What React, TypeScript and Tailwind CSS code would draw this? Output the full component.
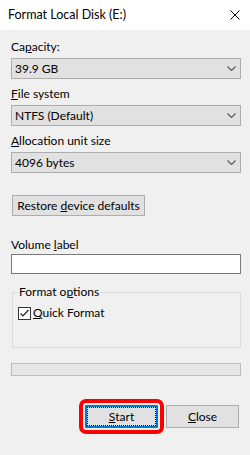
import React from "react";

function Chevron() {
  return (
    <svg width="9" height="5" viewBox="0 0 9 5" className="shrink-0">
      <path d="M0.5 0.5 L4.5 4.5 L8.5 0.5" fill="none" stroke="#5a5a5a" strokeWidth="1.2" />
    </svg>
  );
}

function Select({ value }: { value: string }) {
  return (
    <div className="flex h-[21px] items-center justify-between border border-[#adadad] bg-[#e1e1e1] pl-[3px] pr-[4px]">
      <span>{value}</span>
      <Chevron />
    </div>
  );
}

export default function App() {
  return (
    <div className="h-[455px] w-[250px] overflow-hidden bg-[#f0f0f0] text-[12px] leading-[16px] text-black [font-family:Lato,sans-serif]">
      {/* Title bar */}
      <div className="flex h-[30px] items-center justify-between bg-white pl-[8px] pr-[10px]">
        <span className="text-[12.5px]">Format Local Disk (E:)</span>
        <svg width="10" height="10" viewBox="0 0 10 10">
          <path d="M0.5 0.5 L9.5 9.5 M9.5 0.5 L0.5 9.5" stroke="#000" strokeWidth="1" />
        </svg>
      </div>

      <div className="flex flex-col pl-[11px] pr-[9px]">
        <div className="mt-[9px] mb-[3px]">
          Ca<u>p</u>acity:
        </div>
        <Select value="39.9 GB" />

        <div className="mt-[7px] mb-[3px]">
          <u>F</u>ile system
        </div>
        <Select value="NTFS (Default)" />

        <div className="mt-[7px] mb-[3px]">
          <u>A</u>llocation unit size
        </div>
        <Select value="4096 bytes" />

        <button className="ml-[1px] mt-[22px] flex h-[21px] w-[133px] items-center justify-center border border-[#adadad] bg-[#e1e1e1]">
          <span>
            Restore <u>d</u>evice defaults
          </span>
        </button>

        <div className="mt-[21px] mb-[1px]">
          Volume <u>l</u>abel
        </div>
        <div className="h-[20px] border border-[#7a7a7a] bg-white" />

        <fieldset className="ml-[1px] mt-[10px] h-[64px] border border-[#dcdcdc] px-[5px]">
          <legend className="px-[1px]">
            Format o<u>p</u>tions
          </legend>
          <label className="mt-[5px] flex items-center gap-[2px]">
            <span className="flex h-[13px] w-[13px] items-center justify-center border border-[#333] bg-white">
              <svg width="11" height="11" viewBox="0 0 11 11">
                <path d="M1.5 5.5 L4 8 L9.5 2" fill="none" stroke="#222" strokeWidth="1.2" />
              </svg>
            </span>
            <span>
              <u>Q</u>uick Format
            </span>
          </label>
        </fieldset>

        <div className="mt-[15px] h-[13px] border border-[#bcbcbc] bg-[#e6e6e6]" />

        <div className="mt-[29px] flex justify-end gap-[8px] pr-[2px]">
          <button className="flex h-[23px] w-[73px] items-center justify-center rounded-[1px] border-2 border-[#0078d7] bg-[#e1e1e1] outline-4 outline-offset-[2px] outline-[#ff0000]">
            <span className="flex h-full w-full items-center justify-center border border-dotted border-black">
              <u>S</u>tart
            </span>
          </button>
          <button className="flex h-[23px] w-[73px] items-center justify-center border border-[#adadad] bg-[#e1e1e1]">
            <span>
              <u>C</u>lose
            </span>
          </button>
        </div>
      </div>
    </div>
  );
}
